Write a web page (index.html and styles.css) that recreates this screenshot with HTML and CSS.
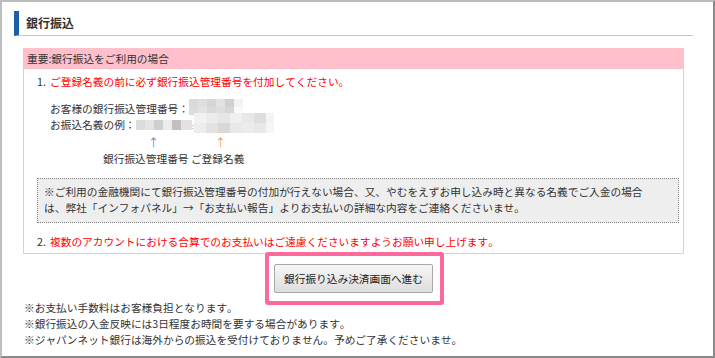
FILE: index.html
```html
<!DOCTYPE html>
<html lang="ja">
<head>
    <meta charset="UTF-8">
    <link rel="stylesheet" href="styles.css">
    <title>銀行振込</title>
</head>
<body>
    <div class="frame">
        <h2 class="ttl">銀行振込</h2>

        <div class="notice">
            <div class="notice-head">重要:銀行振込をご利用の場合</div>
            <div class="notice-body">
                <div class="item">
                    <span class="num">1.</span>
                    <span class="red">ご登録名義の前に必ず銀行振込管理番号を付加してください。</span>
                </div>

                <div class="sample">
                    <div class="sample-line">お客様の銀行振込管理番号：<span class="mosaic m1"></span></div>
                    <div class="sample-line">お振込名義の例：<span class="mosaic m2"></span><span class="dot">:</span><span class="mosaic m3"></span></div>
                    <div class="arrows">
                        <span class="arrow arrow-a">↑</span>
                        <span class="arrow arrow-b">↑</span>
                    </div>
                    <div class="labels">銀行振込管理番号 ご登録名義</div>
                </div>

                <div class="caution">
                    ※ご利用の金融機関にて銀行振込管理番号の付加が行えない場合、又、やむをえずお申し込み時と異なる名義でご入金の場合は、弊社「インフォパネル」→「お支払い報告」よりお支払いの詳細な内容をご連絡くださいませ。
                </div>

                <div class="item item2">
                    <span class="num">2.</span>
                    <span class="red">複数のアカウントにおける合算でのお支払いはご遠慮くださいますようお願い申し上げます。</span>
                </div>
            </div>
        </div>

        <div class="btn-area">
            <div class="btn-wrap">
                <button type="button" class="bttGo">銀行振り込み決済画面へ進む</button>
                <span class="mark"></span>
            </div>
        </div>

        <div class="notes">
            <p>※お支払い手数料はお客様負担となります。</p>
            <p>※銀行振込の入金反映には3日程度お時間を要する場合があります。</p>
            <p>※ジャパンネット銀行は海外からの振込を受付けておりません。予めご了承くださいませ。</p>
        </div>
    </div>
</body>
</html>
```

FILE: styles.css
```css
body {
    margin: 0;
    padding: 0;
    background: #fff;
    font-family: "Noto Sans CJK JP", "Noto Sans", sans-serif;
    font-size: 10.7px;
    font-kerning: none;
    color: #333;
}

.frame {
    width: 715px;
    height: 358px;
    box-sizing: border-box;
    border-top: 2px solid #bdbdbd;
    border-left: 2px solid #bdbdbd;
    border-right: 2px solid #8a8a8a;
    border-bottom: 2px solid #8a8a8a;
    padding: 9px 20px 0 12px;
    overflow: hidden;
}

.ttl {
    margin: 0;
    height: 24px;
    line-height: 24px;
    font-size: 12px;
    font-weight: bold;
    color: #333;
    border-left: 5px solid #1b5ea9;
    border-bottom: 1px solid #c8c8c8;
    padding-left: 7px;
}

.notice {
    margin: 12px 9px 0;
    border: 1px solid #ffc0cb;
}

.notice-head {
    background: #ffc0cb;
    height: 21px;
    line-height: 21px;
    padding-left: 3px;
    margin-top: -1px;
}

.notice-body {
    padding: 5px 4px 3px 13px;
}

.item {
    display: flex;
    line-height: 16px;
}

.num {
    width: 13px;
}

.red {
    color: #f00;
}

.sample {
    margin: 11px 0 0 13px;
    line-height: 16px;
}

.sample-line {
    height: 16px;
}

.mosaic {
    display: inline-block;
    vertical-align: top;
}

.m1 {
    width: 54px;
    height: 16px;
    margin-top: -2px;
    background:
        linear-gradient(90deg, #dadada 0 17%, #dedede 17% 33%, #d6d6d6 33% 50%, #e2e2e2 50% 67%, #d2cfd2 67% 83%, #f2f2f2 83%) top / 100% 50% no-repeat,
        linear-gradient(90deg, #dcdcdc 0 17%, #e3e3e3 17% 33%, #dadada 33% 50%, #dedede 50% 67%, #d6d6d6 67% 83%, #fafafa 83%) bottom / 100% 50% no-repeat;
}

.m2 {
    width: 56px;
    height: 10px;
    margin-top: 3px;
    background: linear-gradient(90deg, #dcdcdc 0 16%, #e4e4e4 16% 32%, #cfcfcf 32% 48%, #ececec 48% 64%, #c2bfbf 64% 80%, #e2e2e2 80%);
}

.dot {
    display: inline-block;
    width: 2px;
    color: #9ab;
    font-size: 8px;
}

.m3 {
    width: 80px;
    height: 20px;
    margin-top: -4px;
    background:
        linear-gradient(90deg, #f2f2f2 0 15%, #ececec 15% 30%, #e6e6e6 30% 45%, #f0f0f0 45% 60%, #e8e8e8 60% 75%, #dedede 75% 90%, #f4f4f4 90%) top / 100% 50% no-repeat,
        linear-gradient(90deg, #ededed 0 15%, #e2e2e2 15% 30%, #d8d8d8 30% 45%, #e9e9e9 45% 60%, #ececec 60% 75%, #e8e8e8 75% 90%, #f6f6f6 90%) bottom / 100% 50% no-repeat;
}

.arrows {
    display: flex;
    height: 18px;
    line-height: 18px;
}

.arrow {
    font-size: 11px;
}

.arrow-a {
    margin-left: 98px;
    color: #6f78d6;
}

.arrow-b {
    margin-left: 56px;
    color: #ee9a3c;
}

.labels {
    padding-left: 53px;
}

.caution {
    margin: 11px 0 0 0;
    border: 1px dotted #888;
    background: #eee;
    padding: 5px 20px 6px 6px;
    line-height: 16px;
}

.item2 {
    margin-top: 11px;
}

.btn-area {
    display: flex;
    justify-content: center;
    margin-top: 10px;
}

.btn-wrap {
    position: relative;
}

.bttGo {
    display: block;
    width: 159px;
    height: 29px;
    padding: 0;
    font-family: inherit;
    font-size: 10.7px;
    color: #222;
    background: linear-gradient(to bottom, #f6f6f6, #dedede);
    border: 1px solid #a8a8a8;
    border-radius: 2px;
}

/* 枠の強調 */
.mark {
    position: absolute;
    left: -9px;
    right: -11px;
    top: -12px;
    bottom: -12px;
    border: 4px solid #fc6a9b;
    border-radius: 3px;
    box-sizing: border-box;
}

.notes {
    margin: 7px 0 0 10px;
    line-height: 16px;
}

.notes p {
    margin: 0;
}
```
